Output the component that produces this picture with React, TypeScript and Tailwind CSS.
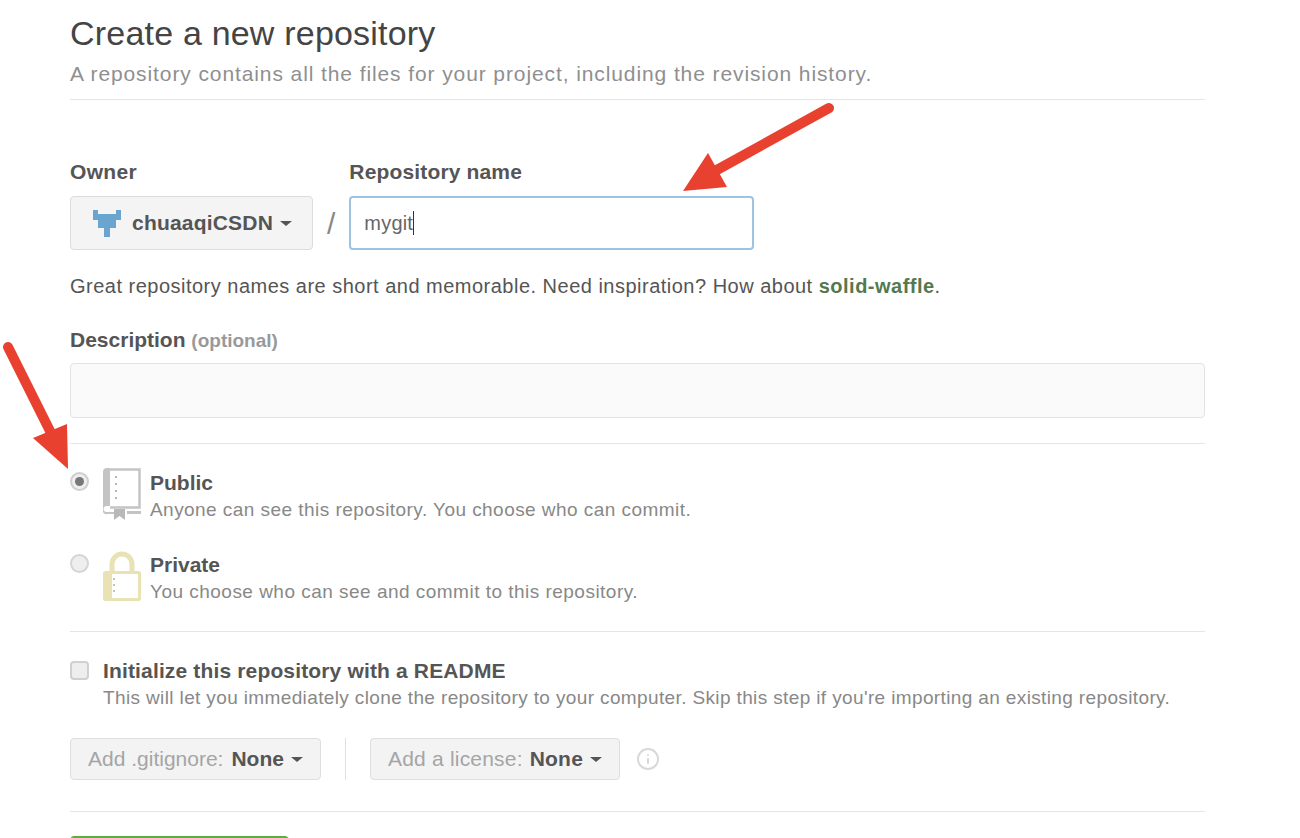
import { FiInfo } from "react-icons/fi";

const FONT = "font-['Liberation_Sans',Arial,sans-serif]";

function Caret() {
  return <span className="ml-[7px] inline-block border-x-[6px] border-t-[5px] border-x-transparent border-t-[#555] align-middle" />;
}

function BookIcon() {
  return (
    <svg width="38" height="52" viewBox="0 0 38 52" className="shrink-0">
      <path d="M4 1.500h32.500v38H7" fill="none" stroke="#c4c4c4" strokeWidth="2.500" />
      <path d="M4 0h3v38h-3a3 3 0 0 0-1 6h8v2H4a3 3 0 0 1-4-3V4a4 4 0 0 1 4-4z" fill="#c4c4c4" />
      <path d="M24 43h14v3H24z" fill="#c4c4c4" />
      <path d="M3 41h34v2H3z" fill="#fff" />
      <path d="M11 41h11v11l-5.500-4-5.500 4z" fill="#b9b9b9" />
      <path d="M12 8h2v2h-2zM12 15h2v2h-2zM12 22h2v2h-2zM12 29h2v2h-2z" fill="#b5b5b5" />
    </svg>
  );
}

function LockIcon() {
  return (
    <svg width="38" height="50" viewBox="0 0 38 50" className="shrink-0">
      <path d="M9 21V13a10 10 0 0 1 20 0v8" fill="none" stroke="#e8e2b4" strokeWidth="5" />
      <rect x="1.500" y="21.500" width="35" height="27" rx="1" fill="#fff" stroke="#e8e2b4" strokeWidth="3" />
      <path d="M2 21h7v28H2z" fill="#e8e2b4" />
      <path d="M10 27h2v2h-2zM10 33h2v2h-2zM10 39h2v2h-2z" fill="#c9c59c" />
    </svg>
  );
}

function Owl() {
  return (
    <svg width="28" height="27" viewBox="0 0 28 27" className="shrink-0">
      <path d="M0 0h5v4h18V0h5v10h-5v8h-6v9h-6v-9H5v-8H0z" fill="#6aa5cf" />
    </svg>
  );
}

function Rule() {
  return <div className="h-px w-full bg-[#e5e5e5]" />;
}

export default function App() {
  return (
    <div className={`${FONT} relative h-[838px] w-[1300px] overflow-hidden bg-white text-[#444]`}>
      <div className="ml-[70px] w-[1135px]">
        <h1 className="pt-[14px] text-[34px] leading-[38px] tracking-[0.2px] text-[#444]">Create a new repository</h1>
        <p className="mt-[10px] text-[21px] leading-[24px] tracking-[0.9px] text-[#8f8f8f]">
          A repository contains all the files for your project, including the revision history.
        </p>
        <div className="mt-[13px]"><Rule /></div>

        <div className="mt-[60px] flex items-start">
          <div>
            <div className="text-[21px] font-bold leading-[24px] tracking-[0.3px] text-[#555]">Owner</div>
            <div className="mt-[12px] flex h-[54px] w-[243px] items-center rounded-[4px] border border-[#dcdcdc] bg-[#f4f4f4] pl-[22px] text-[21px] font-bold tracking-[0.2px] text-[#555]">
              <Owl />
              <span className="ml-[11px]">chuaaqiCSDN</span>
              <Caret />
            </div>
          </div>
          <div className="ml-[14px] mt-[36px] flex h-[54px] items-center text-[30px] font-light text-[#888]">/</div>
          <div className="ml-[14px]">
            <div className="text-[21px] font-bold leading-[24px] tracking-[0.15px] text-[#555]">Repository name</div>
            <div className="mt-[12px] flex h-[54px] w-[405px] items-center rounded-[4px] border-2 border-[#9cc4e2] bg-white pl-[13px] text-[20px] tracking-[0.2px] text-[#666]">
              mygit<span className="h-[24px] w-px bg-[#333]" />
            </div>
          </div>
        </div>

        <p className="mt-[24px] text-[20px] leading-[24px] tracking-[0.49px] text-[#555]">
          Great repository names are short and memorable. Need inspiration? How about <b className="text-[#55794f]">solid-waffle</b>.
        </p>

        <div className="mt-[30px] text-[21px] font-bold leading-[24px] text-[#555]">
          Description <span className="text-[19px] text-[#999]">(optional)</span>
        </div>
        <div className="mt-[10px] h-[55px] rounded-[4px] border border-[#e3e3e3] bg-[#fafafa]" />
        <div className="mt-[25px]"><Rule /></div>

        <div className="mt-[24px] flex items-start">
          <span className="mt-[4px] flex h-[19px] w-[19px] items-center justify-center rounded-full border-2 border-[#cfcfcf] bg-[#eee]">
            <span className="h-[9px] w-[9px] rounded-full bg-[#777]" />
          </span>
          <span className="ml-[14px]"><BookIcon /></span>
          <div className="ml-[9px] pt-[3px]">
            <div className="text-[21px] font-bold leading-[24px] text-[#555]">Public</div>
            <div className="mt-[4px] text-[19px] leading-[22px] tracking-[0.45px] text-[#888]">Anyone can see this repository. You choose who can commit.</div>
          </div>
        </div>

        <div className="mt-[30px] flex items-start">
          <span className="mt-[3px] h-[19px] w-[19px] rounded-full border-2 border-[#d5d5d5] bg-[#eee]" />
          <span className="ml-[14px]"><LockIcon /></span>
          <div className="ml-[9px] pt-[2px]">
            <div className="text-[21px] font-bold leading-[24px] text-[#555]">Private</div>
            <div className="mt-[4px] text-[19px] leading-[22px] tracking-[0.48px] text-[#888]">You choose who can see and commit to this repository.</div>
          </div>
        </div>

        <div className="mt-[28px]"><Rule /></div>

        <div className="mt-[27px] flex items-start">
          <span className="mt-[2px] h-[19px] w-[19px] rounded-[4px] border-2 border-[#d0d0d0] bg-[#eee]" />
          <div className="ml-[14px]">
            <div className="text-[21px] font-bold leading-[24px] tracking-[0.15px] text-[#555]">Initialize this repository with a README</div>
            <div className="mt-[4px] text-[19px] leading-[22px] tracking-[0.37px] text-[#888]">
              This will let you immediately clone the repository to your computer. Skip this step if you're importing an existing repository.
            </div>
          </div>
        </div>

        <div className="mt-[29px] flex items-center">
          <div className="flex h-[42px] w-[251px] items-center rounded-[4px] border border-[#dedede] bg-[#f3f3f3] pl-[17px] text-[21px] text-[#a5a5a5]">
            Add .gitignore:<b className="ml-[8px] text-[#555]">None</b><Caret />
          </div>
          <div className="mx-[24px] h-[42px] w-px bg-[#e0e0e0]" />
          <div className="flex h-[42px] w-[250px] items-center rounded-[4px] border border-[#dedede] bg-[#f3f3f3] pl-[17px] text-[21px] tracking-[0.2px] text-[#a5a5a5]">
            Add a license:<b className="ml-[7px] text-[#555]">None</b><Caret />
          </div>
          <FiInfo className="ml-[16px] text-[24px] text-[#d8d8d8]" />
        </div>

        <div className="mt-[31px]"><Rule /></div>

        <div className="mt-[24px] h-[20px] w-[219px] rounded-t-[4px] border border-[#5ca941] bg-[#60b044]" />
      </div>

      {/* annotation arrows drawn over the page */}
      <svg width="170" height="100" viewBox="680 100 170 100" className="absolute left-[680px] top-[100px]">
        <path d="M829 108 L715 171" fill="none" stroke="#e8412f" strokeWidth="10" strokeLinecap="round" />
        <path d="M683 191 L708 153 L727 187 Z" fill="#e8412f" />
      </svg>
      <svg width="80" height="140" viewBox="0 340 80 140" className="absolute left-0 top-[340px]">
        <path d="M8 347 L50 431" fill="none" stroke="#e8412f" strokeWidth="10" strokeLinecap="round" />
        <path d="M68 469 L33 438 L67 424 Z" fill="#e8412f" />
      </svg>
    </div>
  );
}
